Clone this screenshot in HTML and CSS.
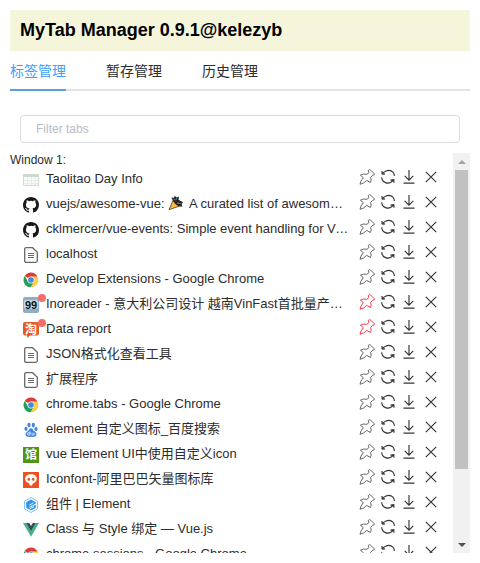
FILE: index.html
```
<!DOCTYPE html>
<html lang="zh-CN">
<head>
<meta charset="utf-8">
<title>MyTab Manager</title>
<link rel="stylesheet" href="styles.css">
</head>
<body>
<svg class="sprite" aria-hidden="true">
  <symbol id="pin" viewBox="0 0 16 16"><path d="M9.2 1.5Q10.3-.1 11.7 1.2L15.2 4.7Q16 6.2 13.8 6.2L11.6 8.4Q12.9 11.2 11.4 13.5L7.7 11.4Q4.7 14.7 1 15.3Q1.2 12.3 4.3 8.7L1.4 6.2Q4.5 4.3 7.9 5.3L10 3.5Z"/></symbol>
  <symbol id="refresh" viewBox="0 0 16 16"><path d="M5.5 2.2Q10 .1 13 3.2Q14.3 4.8 14.4 7M2.1 5.2L2 1.9M2.1 5.2L5.1 4.9M2.1 5.1Q3.5 3 5.5 2.2M1.7 8.2Q1.8 12.2 5.5 13.6Q10 15.3 13.6 10.8M10.5 11.1L13.8 10.7L14 13.8"/></symbol>
  <symbol id="download" viewBox="0 0 16 16"><path d="M8 1V11M3.7 6.9L8 11.2L12.3 6.9M2.5 14.1H13.5"/></symbol>
  <symbol id="close" viewBox="0 0 16 16"><path d="M2.8 2.8L13.2 13.2M13.2 2.8L2.8 13.2"/></symbol>
  <symbol id="table" viewBox="0 0 16 16"><path fill="#fafafa" stroke="#d5d8d5" d="M.5 2.5H15.5V13.5H.5Z"/><path fill="#cbdccb" d="M0 2H16V5H0Z"/><path fill="none" stroke="#e9ebe9" d="M4.5 5V13M8.5 5V13M12.5 5V13M1 8.5H15M1 11.5H15"/></symbol>
  <symbol id="github" viewBox="0 0 16 16"><path fill="#191717" d="M8 0C3.58 0 0 3.58 0 8c0 3.54 2.29 6.53 5.47 7.59.4.07.55-.17.55-.38 0-.19-.01-.82-.01-1.49-2.01.37-2.53-.49-2.69-.94-.09-.23-.48-.94-.82-1.13-.28-.15-.68-.52-.01-.53.63-.01 1.08.58 1.23.82.72 1.21 1.87.87 2.33.66.07-.52.28-.87.51-1.07-1.78-.2-3.64-.89-3.64-3.95 0-.87.31-1.59.82-2.15-.08-.2-.36-1.02.08-2.12 0 0 .67-.21 2.2.82a7.6 7.6 0 0 1 4 0c1.53-1.04 2.2-.82 2.2-.82.44 1.1.16 1.92.08 2.12.51.56.82 1.27.82 2.15 0 3.07-1.87 3.75-3.65 3.95.29.25.54.73.54 1.48 0 1.07-.01 1.93-.01 2.2 0 .21.15.46.55.38A8 8 0 0 0 16 8c0-4.42-3.58-8-8-8z"/></symbol>
  <symbol id="file" viewBox="0 0 16 16"><path fill="#fff" stroke="#686868" stroke-width="1.3" d="M3.2.7H9.6L14.3 5.3V13.8Q14.3 15.3 12.8 15.3H3.2Q1.7 15.3 1.7 13.8V2.2Q1.7.7 3.2.7Z"/><path fill="none" stroke="#686868" d="M5 6.5H11M5 8.5H11M5 10.5H11"/></symbol>
  <symbol id="chrome" viewBox="0 0 16 16"><path fill="#dd3e34" d="M8 8L1.7 4.1A7.2 7.2 0 0 1 14.5 4.8H8Z"/><path fill="#fbcf43" d="M8 8V4.8H14.5A7.3 7.3 0 0 1 7.6 15.3L11 9.6Z"/><path fill="#21a05a" d="M8 8L11 9.6L7.6 15.3A7.3 7.3 0 0 1 1.7 4.1L5 9.5Z"/><circle cx="8" cy="8" r="3.5" fill="#f4f4f4"/><circle cx="8" cy="8" r="2.8" fill="#4688db"/></symbol>
  <symbol id="ino" viewBox="0 0 16 16"><rect width="16" height="16" rx="2" fill="#8eafc6"/><rect x="1" y="3" width="14" height="9" rx="2" fill="#c4d9e6"/><text x="8" y="11.5" text-anchor="middle" textLength="12" class="glyph-ino">99</text></symbol>
  <symbol id="taobao" viewBox="0 0 16 16"><path fill="#e65a25" d="M2 0H14Q16 0 16 2V11Q16 13.5 14 13.5H7L4.5 16L4 13.5H2Q0 13.5 0 11V2Q0 0 2 0Z"/><text x="8" y="11.6" text-anchor="middle" class="glyph-cn">淘</text></symbol>
  <symbol id="baidu" viewBox="0 0 16 16"><g fill="#3f84e4"><ellipse cx="3" cy="6.8" rx="1.6" ry="2.1"/><ellipse cx="6" cy="3" rx="1.6" ry="2.3"/><ellipse cx="10.3" cy="3.1" rx="1.6" ry="2.3"/><ellipse cx="13" cy="7" rx="1.6" ry="2.1"/><path d="M8 6.3Q9.5 6.3 10.5 8.4Q14 10.8 13.5 13Q12.8 15.3 8 14.8Q3.1 15.3 2.5 13Q2.1 10.9 5.5 8.4Q6.5 6.3 8 6.3Z"/></g><path fill="none" stroke="#fff" stroke-width=".8" d="M7 9.3V13H5.5Q4.5 13 4.5 12Q4.5 10.8 5.5 10.8H7M9 10.7V12.4Q9 13 9.8 13H11V10.7"/></symbol>
  <symbol id="guan" viewBox="0 0 16 16"><path fill="#519514" d="M0 0H16V16H0Z"/><text x="8" y="12.2" text-anchor="middle" class="glyph-cn">馆</text></symbol>
  <symbol id="iconfont" viewBox="0 0 16 16"><path fill="#ee5121" d="M0 0H16V16H0Z"/><path fill="#fff" d="M8 2.2C4.4 2.2 2.2 4.1 2.2 7C2.2 9.3 4 10.7 6 11.2L7 13.6H9L10 11.2C12 10.7 13.8 9.3 13.8 7C13.8 4.1 11.6 2.2 8 2.2Z"/><circle cx="5.8" cy="7.4" r="1.4" fill="#ee5121"/><circle cx="10.2" cy="7.4" r="1.4" fill="#ee5121"/></symbol>
  <symbol id="element" viewBox="0 0 16 16"><path fill="#fff" stroke="#64b1f2" stroke-width=".8" d="M8 .5L14.5 4.2V11.8L8 15.5L1.5 11.8V4.2Z"/><path fill="#2e94ed" d="M8 2.4L12.8 5.2V6.4L6.5 10V11.1L12.8 7.5V10.8L8 13.6L3.2 10.8V5.2Z"/><path stroke="#fff" stroke-width=".9" d="M6.3 8.2L10.5 5.8M6.5 12.2L11 9.6"/></symbol>
  <symbol id="vue" viewBox="0 0 16 16"><path fill="#42b584" d="M0 1H3.3L8 9L12.7 1H16L8 14.8Z"/><path fill="#34495d" d="M3.2 1H6.2L8 4L9.8 1H12.8L8 9.2Z"/></symbol>
  <symbol id="party" viewBox="0 0 16 16"><path fill="#f6b93c" stroke="#3b2a18" stroke-width=".7" d="M1 14.7L4.8 5.6L11 11.3Z"/><path fill="#252525" d="M4.7 5.3L3.4 2.6L6 2.8L6.8.8L8.5 2.5L11 1.4L10.5 4.5L12.5 6L15 7L13.6 9L14.5 11.5L11 11.6Q6.8 9.6 4.7 5.3Z"/><path fill="none" stroke="#348b9a" d="M5.3 3.9L7.5 5.1M8.5 3L8 5"/><path stroke="#d6722d" d="M9 8L12.5 8.5"/></symbol>
</svg>
<main class="app">
  <h1 class="title">MyTab Manager 0.9.1@kelezyb</h1>
  <nav class="tabs">
    <a class="tab active">标签管理</a>
    <a class="tab">暂存管理</a>
    <a class="tab">历史管理</a>
  </nav>
  <input class="filter" type="text" placeholder="Filter tabs">
  <section class="pane">
    <div class="list">
      <div class="window">Window 1:</div>
      <div class="row"><span class="fav"><svg><use href="#table"/></svg></span><span class="name">Taolitao Day Info</span><span class="actions"><svg><use href="#pin"/></svg><svg><use href="#refresh"/></svg><svg><use href="#download"/></svg><svg><use href="#close"/></svg></span></div>
      <div class="row"><span class="fav"><svg><use href="#github"/></svg></span><span class="name">vuejs/awesome-vue: <svg class="emoji"><use href="#party"/></svg> A curated list of awesome things related to Vue.js</span><span class="actions"><svg><use href="#pin"/></svg><svg><use href="#refresh"/></svg><svg><use href="#download"/></svg><svg><use href="#close"/></svg></span></div>
      <div class="row"><span class="fav"><svg><use href="#github"/></svg></span><span class="name">cklmercer/vue-events: Simple event handling for Vue.js</span><span class="actions"><svg><use href="#pin"/></svg><svg><use href="#refresh"/></svg><svg><use href="#download"/></svg><svg><use href="#close"/></svg></span></div>
      <div class="row"><span class="fav"><svg><use href="#file"/></svg></span><span class="name">localhost</span><span class="actions"><svg><use href="#pin"/></svg><svg><use href="#refresh"/></svg><svg><use href="#download"/></svg><svg><use href="#close"/></svg></span></div>
      <div class="row"><span class="fav"><svg><use href="#chrome"/></svg></span><span class="name">Develop Extensions - Google Chrome</span><span class="actions"><svg><use href="#pin"/></svg><svg><use href="#refresh"/></svg><svg><use href="#download"/></svg><svg><use href="#close"/></svg></span></div>
      <div class="row pinned"><span class="fav"><svg><use href="#ino"/></svg></span><span class="name">Inoreader - 意大利公司设计 越南VinFast首批量产车型</span><span class="actions"><svg><use href="#pin"/></svg><svg><use href="#refresh"/></svg><svg><use href="#download"/></svg><svg><use href="#close"/></svg></span></div>
      <div class="row pinned"><span class="fav"><svg><use href="#taobao"/></svg></span><span class="name">Data report</span><span class="actions"><svg><use href="#pin"/></svg><svg><use href="#refresh"/></svg><svg><use href="#download"/></svg><svg><use href="#close"/></svg></span></div>
      <div class="row"><span class="fav"><svg><use href="#file"/></svg></span><span class="name">JSON格式化查看工具</span><span class="actions"><svg><use href="#pin"/></svg><svg><use href="#refresh"/></svg><svg><use href="#download"/></svg><svg><use href="#close"/></svg></span></div>
      <div class="row"><span class="fav"><svg><use href="#file"/></svg></span><span class="name">扩展程序</span><span class="actions"><svg><use href="#pin"/></svg><svg><use href="#refresh"/></svg><svg><use href="#download"/></svg><svg><use href="#close"/></svg></span></div>
      <div class="row"><span class="fav"><svg><use href="#chrome"/></svg></span><span class="name">chrome.tabs - Google Chrome</span><span class="actions"><svg><use href="#pin"/></svg><svg><use href="#refresh"/></svg><svg><use href="#download"/></svg><svg><use href="#close"/></svg></span></div>
      <div class="row"><span class="fav"><svg><use href="#baidu"/></svg></span><span class="name">element 自定义图标_百度搜索</span><span class="actions"><svg><use href="#pin"/></svg><svg><use href="#refresh"/></svg><svg><use href="#download"/></svg><svg><use href="#close"/></svg></span></div>
      <div class="row"><span class="fav"><svg><use href="#guan"/></svg></span><span class="name">vue Element UI中使用自定义icon</span><span class="actions"><svg><use href="#pin"/></svg><svg><use href="#refresh"/></svg><svg><use href="#download"/></svg><svg><use href="#close"/></svg></span></div>
      <div class="row"><span class="fav"><svg><use href="#iconfont"/></svg></span><span class="name">Iconfont-阿里巴巴矢量图标库</span><span class="actions"><svg><use href="#pin"/></svg><svg><use href="#refresh"/></svg><svg><use href="#download"/></svg><svg><use href="#close"/></svg></span></div>
      <div class="row"><span class="fav"><svg><use href="#element"/></svg></span><span class="name">组件 | Element</span><span class="actions"><svg><use href="#pin"/></svg><svg><use href="#refresh"/></svg><svg><use href="#download"/></svg><svg><use href="#close"/></svg></span></div>
      <div class="row"><span class="fav"><svg><use href="#vue"/></svg></span><span class="name">Class 与 Style 绑定 — Vue.js</span><span class="actions"><svg><use href="#pin"/></svg><svg><use href="#refresh"/></svg><svg><use href="#download"/></svg><svg><use href="#close"/></svg></span></div>
      <div class="row"><span class="fav"><svg><use href="#chrome"/></svg></span><span class="name">chrome.sessions - Google Chrome</span><span class="actions"><svg><use href="#pin"/></svg><svg><use href="#refresh"/></svg><svg><use href="#download"/></svg><svg><use href="#close"/></svg></span></div>
    </div>
    <div class="scrollbar"><i class="arrow up"></i><i class="thumb"></i><i class="arrow down"></i></div>
  </section>
</main>
</body>
</html>
```
FILE: styles.css
```
* { box-sizing: border-box; }
body { margin: 0; background: #fff; color: #2c2c2c; font-family: "Liberation Sans", "Noto Sans CJK SC", sans-serif; overflow: hidden; }
.sprite { display: none; }
.app { width: 480px; height: 563px; padding: 10px; overflow: hidden; }
.title { height: 41px; margin: 0; padding-left: 10px; background: #f5f5dc; color: #000; font-size: 18px; line-height: 40px; }
.tabs { display: flex; gap: 40px; height: 40px; border-bottom: 2px solid #e4e4e6; font-size: 14px; line-height: 40px; }
.tab { height: 40px; }
.tab.active { color: #409eff; border-bottom: 2px solid #5c9ddd; }
.filter { display: block; width: 440px; height: 28px; margin: 24px 10px 10px; padding: 0 15px; border: 1px solid #d9dce2; border-radius: 4px; font: 12px "Liberation Sans", sans-serif; }
.filter::placeholder { color: #b8bdc8; opacity: 1; }
.pane { display: flex; height: 400px; }
.list { width: 443px; height: 400px; overflow: hidden; }
.window { height: 13px; font-size: 12px; line-height: 14px; }
.row { display: flex; height: 25px; padding-left: 13px; }
.fav { position: relative; width: 16px; height: 16px; margin: 6px 7px 0 0; flex: none; }
.fav svg { display: block; width: 16px; height: 16px; }
.pinned .fav::after { content: ""; position: absolute; left: 15px; top: -3px; width: 8px; height: 8px; border-radius: 50%; background: #f56c6c; }
.name { width: 304px; height: 25px; font-size: 13px; line-height: 26px; white-space: nowrap; overflow: hidden; text-overflow: ellipsis; }
.emoji { width: 16px; height: 16px; margin-right: 2px; vertical-align: -3px; }
.actions { display: flex; gap: 5.2px; margin: 2.5px 0 0 9px; }
.actions svg { width: 16px; height: 16px; fill: none; stroke: #353535; stroke-width: 1.15; }
.actions svg:first-child { stroke: #68656d; stroke-width: 1; }
.pinned .actions svg:first-child { stroke: #f23c4d; }
.glyph-ino { font: bold 11px "Liberation Sans", sans-serif; fill: #111; }
.glyph-cn { font: bold 12px "Noto Sans CJK SC", sans-serif; fill: #fff; }
.scrollbar { display: flex; flex-direction: column; align-items: center; width: 17px; height: 400px; background: #f1f1f1; }
.thumb { width: 13px; height: 299px; background: #c1c1c1; }
.arrow { height: 17px; display: flex; align-items: center; }
.arrow::after { content: ""; border: 4px solid transparent; }
.up::after { border-top: 0; border-bottom-color: #a3a3a3; }
.down { margin-top: auto; }
.down::after { border-bottom: 0; border-top-color: #505050; }
```
